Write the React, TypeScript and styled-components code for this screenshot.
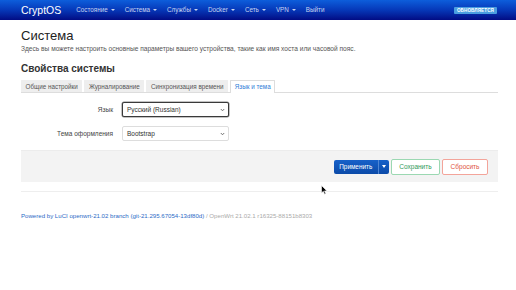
import React from "react";
import styled, { createGlobalStyle } from "styled-components";

const Global = createGlobalStyle`
  html, body { margin: 0; padding: 0; background: #fff; }
  body { font-family: "Liberation Sans", Arial, sans-serif; color: #404040; }
  * { box-sizing: border-box; }
`;

const Header = styled.header`
  height: 20px;
  background: linear-gradient(to bottom, #0d5edb 0%, #0638b8 50%, #020c84 100%);
  display: flex;
  align-items: center;
  padding: 0 19px 0 21px;
`;

const Brand = styled.a`
  color: #fff;
  font-size: 10.5px;
  line-height: 20px;
  margin-right: 10px;
  text-decoration: none;
`;

const Nav = styled.ul`
  display: flex;
  list-style: none;
  margin: 0;
  padding: 0;
  flex: 1;
`;

const NavItem = styled.li<{ $drop?: boolean }>`
  color: #c8d4f0;
  font-size: 6.3px;
  padding: 0 5px;
  line-height: 20px;
  display: flex;
  align-items: center;
  &::after {
    content: "";
    display: ${(p) => (p.$drop ? "inline-block" : "none")};
    margin-left: 3px;
    border-left: 2px solid transparent;
    border-right: 2px solid transparent;
    border-top: 2px solid #c8d4f0;
  }
`;

const Badge = styled.span`
  background: #4a9ee0;
  color: #fff;
  font-size: 4.6px;
  font-weight: bold;
  letter-spacing: 0.1px;
  padding: 0 3px;
  height: 7px;
  line-height: 7px;
  border-radius: 1px;
  text-transform: uppercase;
`;

const Main = styled.main`
  width: 477px;
  margin-left: 21px;
`;

const Title = styled.h2`
  font-size: 13px;
  line-height: 16px;
  font-weight: normal;
  color: #222;
  margin: 8px 0 0;
`;

const Desc = styled.p`
  font-size: 6.6px;
  line-height: 9px;
  color: #555;
  margin: 0;
`;

const Section = styled.h3`
  font-size: 10px;
  line-height: 12px;
  font-weight: bold;
  color: #333;
  margin: 10px 0 0;
`;

const Tabs = styled.ul`
  display: flex;
  list-style: none;
  margin: 5px 0 0;
  padding: 0;
  border-bottom: 1px solid #ddd;
  gap: 2px;
`;

const Tab = styled.li<{ $active?: boolean }>`
  font-size: 6.3px;
  line-height: 11px;
  padding: 0 3.6px;
  color: ${(p) => (p.$active ? "#2e7dd7" : "#555")};
  background: ${(p) => (p.$active ? "#fff" : "#eee")};
  border: 1px solid ${(p) => (p.$active ? "#ddd" : "#eee")};
  border-bottom: none;
  border-radius: 1px 1px 0 0;
  margin-bottom: ${(p) => (p.$active ? "-1px" : "0")};
  height: ${(p) => (p.$active ? "13px" : "12px")};
`;

const Form = styled.div`
  display: grid;
  grid-template-columns: 92px 107px;
  column-gap: 9px;
  row-gap: 9px;
  margin-top: 9px;
  align-items: center;
`;

const Label = styled.label`
  font-size: 6.5px;
  color: #444;
  text-align: right;
`;

const Select = styled.div<{ $focus?: boolean }>`
  height: 15px;
  border: 1px solid ${(p) => (p.$focus ? "#3a3a3a" : "#ddd")};
  border-radius: 2px;
  display: flex;
  align-items: center;
  justify-content: space-between;
  padding: 0 3px 0 4px;
  font-size: 6.5px;
  color: #333;
  background: #fff;
  box-shadow: ${(p) => (p.$focus ? "0 0 0 0.5px #888" : "none")};
`;

const Actions = styled.div`
  margin-top: 9px;
  background: #f3f3f3;
  border-top: 1px solid #ececec;
  height: 32px;
  display: flex;
  align-items: center;
  justify-content: flex-end;
  padding-right: 10px;
  gap: 2px;
`;

const BtnGroup = styled.div`
  display: flex;
  height: 14px;
  border-radius: 2px;
  overflow: hidden;
`;

const ApplyBtn = styled.button`
  all: unset;
  background: linear-gradient(#1761c9, #0b4aa8);
  color: #fff;
  font-size: 6.4px;
  font-family: "Liberation Sans", Arial, sans-serif;
  padding: 0 5.5px;
  height: 14px;
  line-height: 14px;
`;

const CaretBtn = styled.button`
  all: unset;
  background: linear-gradient(#1761c9, #0b4aa8);
  border-left: 1px solid #4f86d4;
  width: 10px;
  height: 14px;
  display: flex;
  align-items: center;
  justify-content: center;
  &::after {
    content: "";
    border-left: 2px solid transparent;
    border-right: 2px solid transparent;
    border-top: 3px solid #fff;
  }
`;

const OutlineBtn = styled.button<{ $tone: "green" | "red" }>`
  all: unset;
  height: 14px;
  line-height: 12px;
  font-family: "Liberation Sans", Arial, sans-serif;
  font-size: 6.5px;
  padding: 0 7.5px;
  border-radius: 2px;
  background: #fff;
  border: 1px solid ${(p) => (p.$tone === "green" ? "#9bd8b2" : "#f3a49a")};
  color: ${(p) => (p.$tone === "green" ? "#2f9a5a" : "#e0533f")};
`;

const Divider = styled.hr`
  border: none;
  border-top: 1px solid #eee;
  margin: 9px 0 0;
`;

const Footer = styled.footer`
  margin-top: 20px;
  font-size: 6.1px;
  color: #aaa;
`;

const FootLink = styled.a`
  color: #2c6bc6;
  text-decoration: none;
`;

const Cursor = styled.svg`
  position: absolute;
  left: 321px;
  top: 185px;
`;

const Chevron = () => (
  <svg width="5" height="4" viewBox="0 0 5 4">
    <polyline points="0.8,1 2.5,2.8 4.2,1" fill="none" stroke="#555" strokeWidth="0.8" />
  </svg>
);

export default function App() {
  return (
    <>
      <Global />
      <Header>
        <Brand>CryptOS</Brand>
        <Nav>
          <NavItem $drop>Состояние</NavItem>
          <NavItem $drop>Система</NavItem>
          <NavItem $drop>Службы</NavItem>
          <NavItem $drop>Docker</NavItem>
          <NavItem $drop>Сеть</NavItem>
          <NavItem $drop>VPN</NavItem>
          <NavItem>Выйти</NavItem>
        </Nav>
        <Badge>Обновляется</Badge>
      </Header>
      <Main>
        <Title>Система</Title>
        <Desc>
          Здесь вы можете настроить основные параметры вашего устройства, такие как имя хоста или часовой пояс.
        </Desc>
        <Section>Свойства системы</Section>
        <Tabs>
          <Tab>Общие настройки</Tab>
          <Tab>Журналирование</Tab>
          <Tab>Синхронизация времени</Tab>
          <Tab $active>Язык и тема</Tab>
        </Tabs>
        <Form>
          <Label>Язык</Label>
          <Select $focus>
            <span>Русский (Russian)</span>
            <Chevron />
          </Select>
          <Label>Тема оформления</Label>
          <Select>
            <span>Bootstrap</span>
            <Chevron />
          </Select>
        </Form>
        <Actions>
          <BtnGroup>
            <ApplyBtn>Применить</ApplyBtn>
            <CaretBtn />
          </BtnGroup>
          <OutlineBtn $tone="green">Сохранить</OutlineBtn>
          <OutlineBtn $tone="red">Сбросить</OutlineBtn>
        </Actions>
        <Divider />
        <Footer>
          <FootLink>Powered by LuCI openwrt-21.02 branch (git-21.295.67054-13df80d)</FootLink> / OpenWrt 21.02.1 r16325-88151b8303
        </Footer>
      </Main>
      <Cursor width="7" height="10" viewBox="0 0 7 10">
        <path d="M0.5 0.5 L0.5 8 L2.3 6.3 L3.6 9.3 L4.8 8.8 L3.5 5.9 L6 5.9 Z" fill="#000" stroke="#fff" strokeWidth="0.6" />
      </Cursor>
    </>
  );
}
